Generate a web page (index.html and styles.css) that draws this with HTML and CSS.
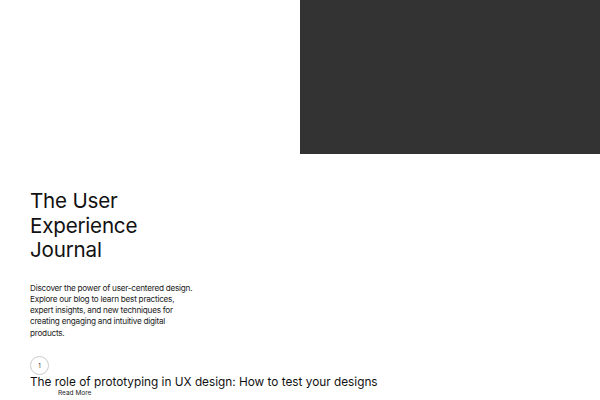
FILE: index.html
```html
<!DOCTYPE html>
<html>
<head>
<meta charset="utf-8">
<link rel="stylesheet" href="styles.css">
</head>
<body>
<div class="top">
  <div class="spacer"></div>
  <div class="hero-box"></div>
</div>
<section class="intro">
  <h1 class="title">The User<br>Experience<br>Journal</h1>
  <p class="lead">Discover the power of user-centered design.<br>Explore our blog to learn best practices,<br>expert insights, and new techniques for<br>creating engaging and intuitive digital<br>products.</p>
  <div class="post">
    <div class="num">1</div>
    <h2 class="post-title">The role of prototyping in UX design: How to test your designs</h2>
    <a class="more">Read More</a>
  </div>
</section>
</body>
</html>
```
FILE: styles.css
```css
html, body { margin: 0; padding: 0; background: #fff; }
body { width: 600px; height: 400px; overflow: hidden; font-family: "Inter", "DejaVu Sans", sans-serif; color: #111; }
.top { display: flex; height: 154px; }
.spacer { flex: 1; }
.hero-box { width: 300px; height: 154px; background: #333333; }
.intro { padding-left: 30px; }
.title { margin: 35px 0 0; font-size: 20.6px; font-weight: 400; line-height: 24.5px; letter-spacing: -0.2px; }
.lead { margin: 20px 0 0; width: 200px; font-size: 8.2px; letter-spacing: -0.25px; line-height: 11.3px; color: #222; }
.post { margin-top: 17px; }
.num { width: 17px; height: 17px; border: 1px solid #ccc; border-radius: 50%; font-size: 6px; display: flex; align-items: center; justify-content: center; color: #333; }
.post-title { margin: 0; font-size: 11.8px; font-weight: 400; line-height: 14px; }
.more { display: block; margin-left: 28px; font-size: 6.5px; line-height: 9px; color: #222; }
```
